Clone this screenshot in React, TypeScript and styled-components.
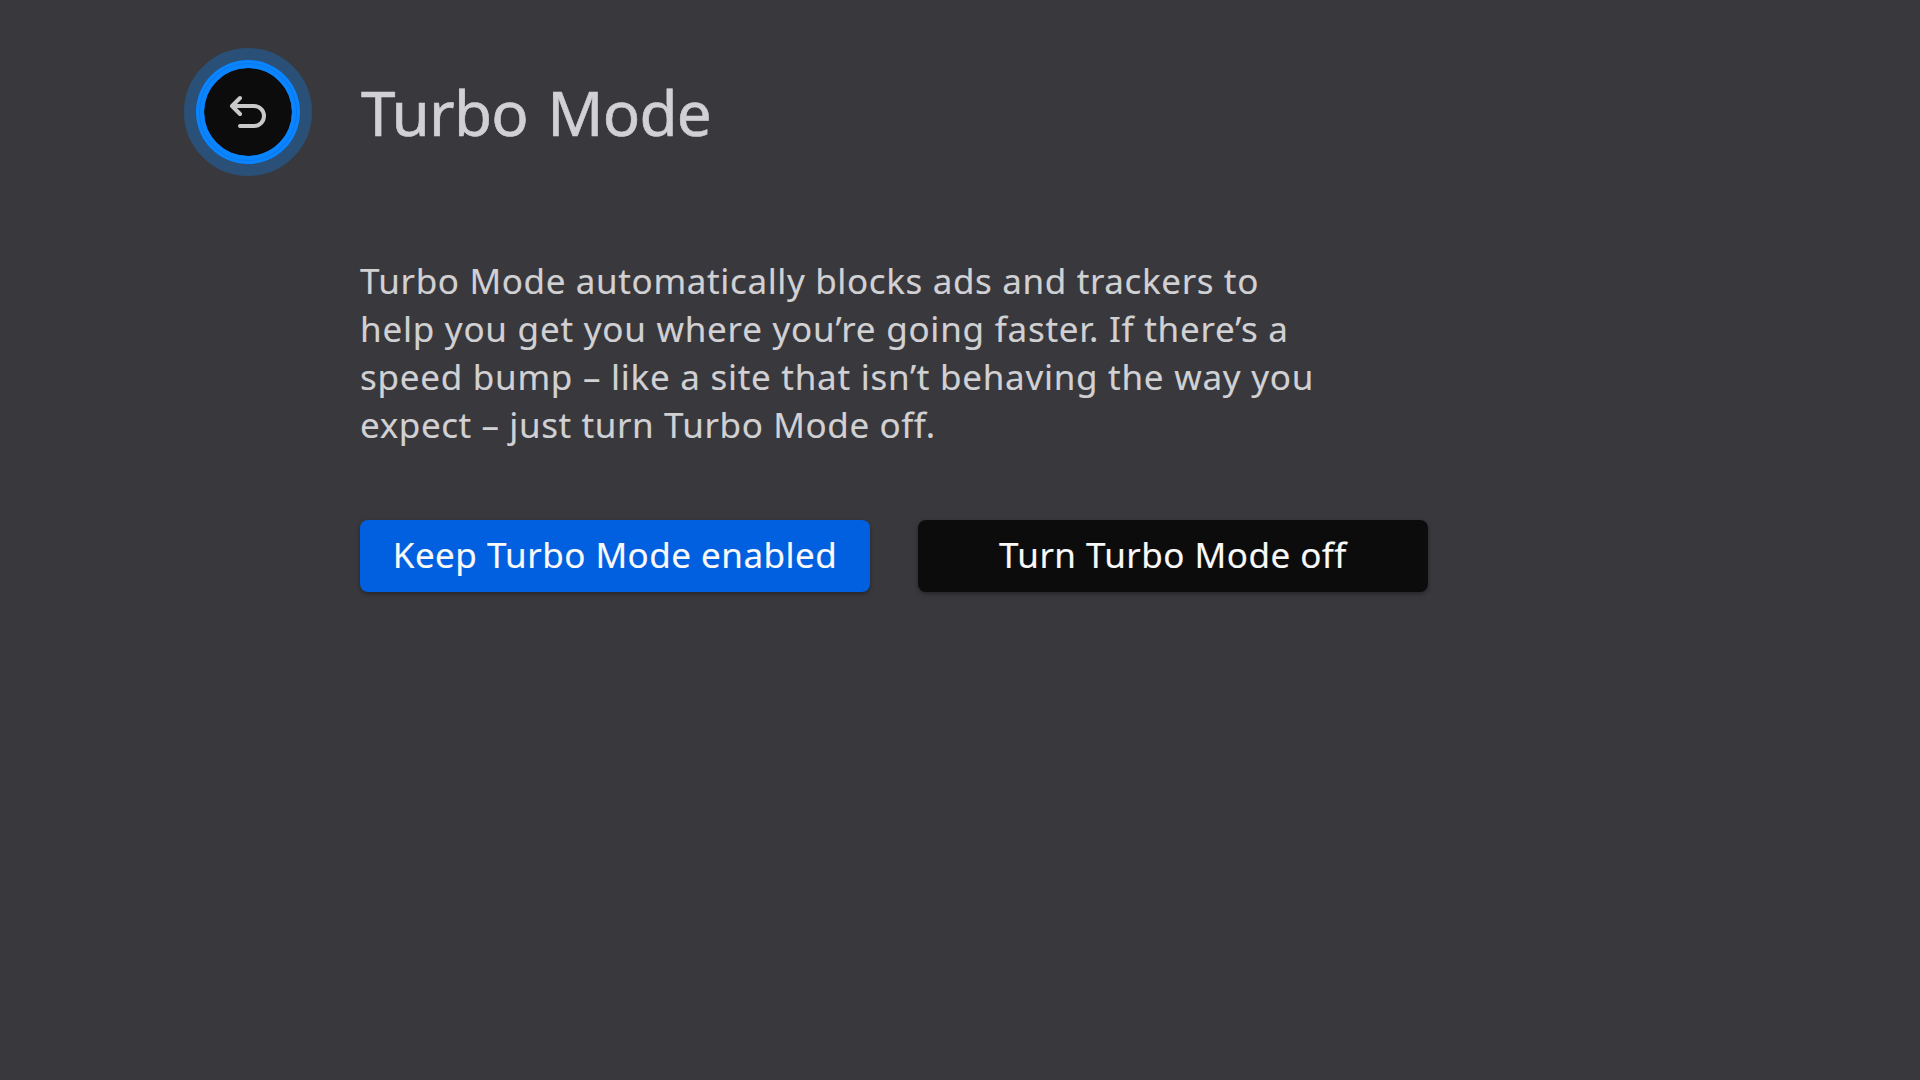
import React from 'react';
import styled, { createGlobalStyle } from 'styled-components';

const GlobalStyle = createGlobalStyle`
  * { box-sizing: border-box; }
  body {
    margin: 0;
    background: #39383d;
    font-family: "Noto Sans", "Open Sans", sans-serif;
  }
`;

const Page = styled.main`
  min-height: 1080px;
  padding: 48px 0 0 184px;
  color: #d1d1d4;
  background: #39383d;
`;

const Header = styled.header`
  display: flex;
  align-items: center;
  gap: 49px;
  height: 128px;
`;

const BackButton = styled.button`
  display: grid;
  place-items: center;
  flex: none;
  width: 128px;
  height: 128px;
  padding: 0;
  border: 12px solid #2a5078;
  border-radius: 50%;
  background: #2a5078;
`;

const BackRing = styled.span`
  display: grid;
  place-items: center;
  width: 104px;
  height: 104px;
  flex: none;
  border-radius: 50%;
  background: #0a84ff;
`;

const BackDisc = styled.span`
  display: grid;
  place-items: center;
  width: 96px;
  height: 96px;
  border: 4px solid #0a84ff;
  border-radius: 50%;
  background: #0c0c0c;
  background-clip: padding-box;
  box-shadow: 0 0 0 1px rgba(12, 80, 150, 0.18);
`;

const Title = styled.h1`
  margin: 0;
  font-size: 62px;
  font-weight: 400;
  line-height: 84px;
  letter-spacing: -0.8px;
  word-spacing: 4px;
  white-space: nowrap;
  -webkit-text-stroke: 0.6px currentColor;
`;

const Content = styled.section`
  padding: 81px 0 0 176px;
`;

const Description = styled.p`
  margin: 0;
  font-size: 35px;
  line-height: 48px;
  -webkit-text-stroke: 0.15px currentColor;
`;

const Line = styled.span<{ $tracking: number }>`
  display: block;
  white-space: nowrap;
  letter-spacing: ${(p) => p.$tracking}px;
`;

const Actions = styled.div`
  display: flex;
  gap: 48px;
  margin-top: 71px;
`;

const ActionButton = styled.button<{ $primary?: boolean; $tracking: number }>`
  width: 510px;
  height: 72px;
  padding: 0 0 2px;
  border: 0;
  border-radius: 8px;
  background: ${(p) => (p.$primary ? '#0060df' : '#0c0c0c')};
  color: #f9f9fa;
  font: 400 35px/48px "Noto Sans", "Open Sans", sans-serif;
  letter-spacing: ${(p) => p.$tracking}px;
  white-space: nowrap;
  box-shadow: 0 2px 4px rgba(0, 0, 0, 0.35);
  -webkit-text-stroke: 0.15px currentColor;
`;

const BackIcon = () => (
  <svg width="48" height="48" viewBox="0 0 48 48" fill="none" stroke="#c9c9ca" strokeWidth="4" strokeLinecap="round" strokeLinejoin="round">
    <path d="M16 10 8 18l8 8M8.500 18H30a10 10 0 0 1 0 20H16" />
  </svg>
);

export default function App() {
  return (
    <>
      <GlobalStyle />
      <Page>
        <Header>
          <BackButton aria-label="Back">
            <BackRing>
              <BackDisc>
                <BackIcon />
              </BackDisc>
            </BackRing>
          </BackButton>
          <Title>Turbo Mode</Title>
        </Header>
        <Content>
          <Description>
            <Line $tracking={0.63}>Turbo Mode automatically blocks ads and trackers to</Line>
            <Line $tracking={0.76}>help you get you where you’re going faster. If there’s a</Line>
            <Line $tracking={0.73}>speed bump – like a site that isn’t behaving the way you</Line>
            <Line $tracking={0.6}>expect – just turn Turbo Mode off.</Line>
          </Description>
          <Actions>
            <ActionButton $primary $tracking={0.48}>Keep Turbo Mode enabled</ActionButton>
            <ActionButton $tracking={0.48}>Turn Turbo Mode off</ActionButton>
          </Actions>
        </Content>
      </Page>
    </>
  );
}
